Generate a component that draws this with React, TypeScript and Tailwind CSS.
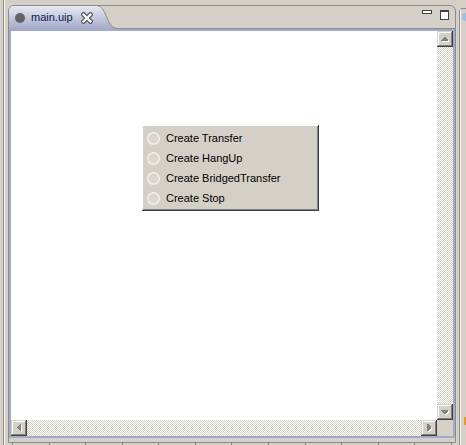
const raised =
  "bg-[#d4d0c8] shadow-[inset_-1px_-1px_#404040,inset_1px_1px_#d4d0c8,inset_-2px_-2px_#808080,inset_2px_2px_#ffffff]";

const checker =
  "bg-[image:repeating-conic-gradient(#d4d0c8_0%_25%,#ffffff_0%_50%)] bg-[length:2px_2px]";

function Arrow({ dir }: { dir: "up" | "down" | "left" | "right" }) {
  const pts = {
    up: "3,0 4,0 7,3 7,4 0,4 0,3",
    down: "0,0 7,0 7,1 4,4 3,4 0,1",
    left: "4,0 4,7 3,7 0,4 0,3 3,0",
    right: "0,0 1,0 4,3 4,4 1,7 0,7",
  }[dir];
  const vertical = dir === "up" || dir === "down";
  return (
    <svg
      width={vertical ? 8 : 5}
      height={vertical ? 5 : 8}
      shapeRendering="crispEdges"
    >
      <polygon points={pts} fill="#ffffff" transform="translate(1,1)" />
      <polygon points={pts} fill="#808080" />
    </svg>
  );
}

function ScrollButton({ dir }: { dir: "up" | "down" | "left" | "right" }) {
  return (
    <div className={`flex h-[16px] w-[16px] shrink-0 items-center justify-center ${raised}`}>
      <Arrow dir={dir} />
    </div>
  );
}

function Radio() {
  return (
    <svg width="13" height="13" className="shrink-0">
      <circle cx="6.5" cy="6.5" r="5.8" fill="#d9d6cf" stroke="#f2f1ee" strokeWidth="1.4" />
    </svg>
  );
}

const items = ["Create Transfer", "Create HangUp", "Create BridgedTransfer", "Create Stop"];

export default function App() {
  return (
    <div className="relative flex h-[445px] w-[466px] overflow-hidden bg-[#d4d0c8] font-['Liberation_Sans',Arial,sans-serif] text-[11px] text-black">
      {/* left neighbour edge */}
      <div className="flex w-[8px] shrink-0 pl-[3px]">
        <div className="h-full w-px bg-[#8c8c8c]" />
        <div className="h-full w-px bg-[#f4f3f0]" />
      </div>

      <div className="flex w-[448px] shrink-0 flex-col">
        {/* editor panel */}
        <div className="mt-[5px] flex h-[438px] flex-col rounded-t-[6px] border border-[#8c8c8c] pb-[4px]">
          {/* tab row */}
          <div className="flex h-[23px] shrink-0">
            <div className="flex w-[88px] shrink-0 items-center rounded-tl-[5px] bg-gradient-to-b from-[#e8eaf1] to-[#a2aac9] pl-[6px]">
              <span className="h-[10px] w-[10px] shrink-0 rounded-full bg-[#646464]" />
              <span className="ml-[6px] text-[11px] text-[#101850]">main.uip</span>
              <svg width="12" height="12" className="ml-[8px] shrink-0">
                <path d="M2.5 2.5 L9.5 9.5 M9.5 2.5 L2.5 9.5" stroke="#5a5a5a" strokeWidth="4.6" strokeLinecap="square" />
                <path d="M2.5 2.5 L9.5 9.5 M9.5 2.5 L2.5 9.5" stroke="#ffffff" strokeWidth="2.2" strokeLinecap="square" />
              </svg>
            </div>
            <svg width="20" height="23" className="shrink-0">
              <defs>
                <linearGradient id="tabg" x1="0" y1="0" x2="0" y2="1">
                  <stop offset="0" stopColor="#e8eaf1" />
                  <stop offset="1" stopColor="#a2aac9" />
                </linearGradient>
              </defs>
              <path d="M0 -1 C10 -1 9 22.5 20 22.5 L20 23 L0 23 Z" fill="url(#tabg)" />
              <path d="M0 -0.5 C10 -0.5 9 22.5 20 22.5" stroke="#8c8c8c" fill="none" />
            </svg>
            <div className="flex flex-1 justify-end gap-[8px] border-b border-[#8c8c8c] pr-[6px] pt-[4px]">
              <div className="h-[4px] w-[10px] border border-[#404040] bg-white" />
              <div className="h-[10px] w-[9px] border border-t-2 border-[#404040] bg-white" />
            </div>
          </div>

          {/* content with blue border */}
          <div className="flex h-[409px] flex-col border-2 border-[#a2aac9] bg-white">
            <div className="flex h-[389px]">
              <div className="relative flex-1 bg-white">
                <div className="absolute left-[131px] top-[94px] flex h-[86px] w-[177px] flex-col bg-[#d4d0c8] pt-[3px] shadow-[inset_-1px_-1px_#404040,inset_1px_1px_#ffffff,inset_-2px_-2px_#808080]">
                  {items.map((t) => (
                    <div key={t} className="flex h-[20px] items-center gap-[6px] pl-[5px]">
                      <Radio />
                      <span>{t}</span>
                    </div>
                  ))}
                </div>
              </div>
              <div className="flex w-[16px] shrink-0 flex-col">
                <ScrollButton dir="up" />
                <div className={`flex-1 ${checker}`} />
                <ScrollButton dir="down" />
              </div>
            </div>
            <div className="flex h-[16px] shrink-0">
              <ScrollButton dir="left" />
              <div className={`flex-1 ${checker}`} />
              <ScrollButton dir="right" />
              <div className="h-[16px] w-[16px] shrink-0 bg-[#d4d0c8]" />
            </div>
          </div>
        </div>
        {/* strip below */}
        <div className="flex h-[2px] justify-between px-[4px]">
          {Array.from({ length: 13 }).map((_, i) => (
            <div key={i} className="h-[2px] w-px bg-[#808080]" />
          ))}
        </div>
      </div>

      {/* right neighbour edge */}
      <div className="relative flex-1 pl-[3px] pt-[8px]">
        <div className="h-full rounded-tl-[4px] border-l border-t border-[#8c8c8c]">
          <div className="h-full border-l border-[#f4f3f0] pl-[1px] pt-[4px]">
            <span className="block h-[8px] w-[8px] rounded-full bg-[#9ec0e8]" />
          </div>
        </div>
        <div className="absolute left-[8px] top-[417px] h-[8px] w-[4px] bg-[#e89a30]" />
      </div>
    </div>
  );
}
